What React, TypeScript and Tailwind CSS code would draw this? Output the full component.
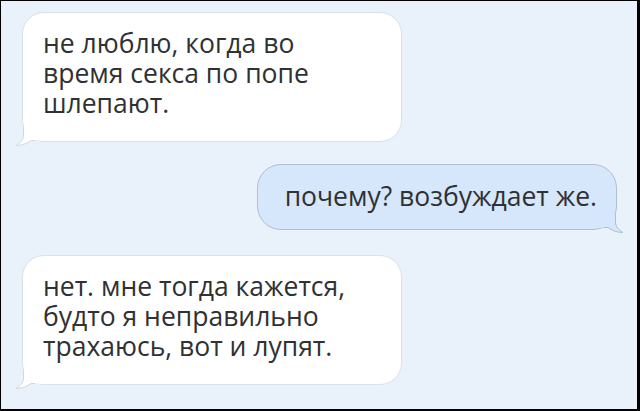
import React from "react";

type Side = "left" | "right";

function Tail({ side, fill, stroke }: { side: Side; fill: string; stroke: string }) {
  const cls =
    side === "left"
      ? "absolute -left-[8px] -bottom-[6px]"
      : "absolute -right-[8px] -bottom-[5px] -scale-x-100";
  return (
    <svg className={cls} width="32" height="20" viewBox="0 0 32 20">
      <path d="M8.5 0 L8.5 8 C8.5 13 5 16 1 18.5 C7 18.5 12 16.5 16 13.5 L32 13.5 L32 0 Z" fill={fill} />
      <path d="M8.5 0 L8.5 8 C8.5 13 5 16 1 18.5 C7 18.5 12 16.5 16 13.5 L20 13.5" fill="none" stroke={stroke} strokeWidth="1" />
    </svg>
  );
}

function Incoming({ lines, className }: { lines: string[]; className?: string }) {
  return (
    <div
      className={`relative w-[380px] rounded-[22px] bg-white border border-[#d9e1ea] pl-[20px] pt-[15px] pb-[23px] ${className ?? ""}`}
    >
      {lines.map((l) => (
        <p key={l} className="leading-[30px]">
          {l}
        </p>
      ))}
      <Tail side="left" fill="#ffffff" stroke="#cfd8e3" />
    </div>
  );
}

export default function App() {
  return (
    <div
      className="w-[640px] h-[411px] overflow-hidden bg-[#e9f1fb] border-t border-l border-r-[3px] border-b-[2px] border-black text-[26.5px] text-[#2f3133] flex flex-col"
      style={{ fontFamily: '"Open Sans", "Noto Sans", sans-serif' }}
    >
      <Incoming
        className="ml-[21px] mt-[11px]"
        lines={["не люблю, когда во", "время секса по попе", "шлепают."]}
      />

      <div className="relative self-end mr-[20px] mt-[22px] rounded-[24px] bg-[#d6e6fb] border border-[#aebfd3] pl-[27px] pr-[19px] pt-[16px] pb-[18px]">
        <p className="leading-[30px] whitespace-nowrap">почему? возбуждает же.</p>
        <Tail side="right" fill="#d6e6fb" stroke="#aebfd3" />
      </div>

      <Incoming
        className="ml-[21px] mt-[25px]"
        lines={["нет. мне тогда кажется,", "будто я неправильно", "трахаюсь, вот и лупят."]}
      />
    </div>
  );
}
